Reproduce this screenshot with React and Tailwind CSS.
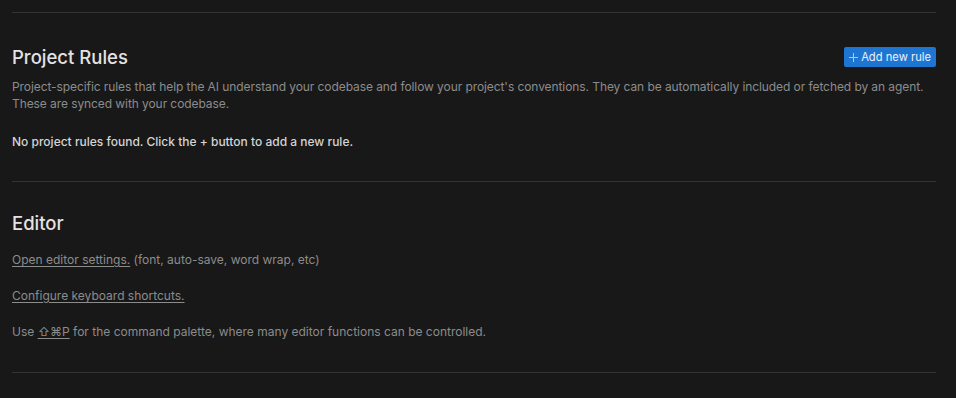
export default function App() {
  return (
    <div className="min-h-screen bg-[#181818] pl-3 pr-5 font-['Inter',sans-serif] text-[12px] text-[#8c8c8c]">
      <div className="pt-3">
        <hr className="border-0 border-t border-[#333333]" />

        {/* Project Rules */}
        <section className="pt-[32px] pb-[31px]">
          <div className="flex items-center justify-between">
            <h2 className="text-[18.5px] font-medium leading-[24px] text-[#e3e3e3]">Project Rules</h2>
            <button className="flex h-[20px] items-center gap-[3px] rounded-[2px] bg-[#1f76d2] px-[5px] text-[11.2px] text-[#e8f0fb]">
              <svg width="9" height="9" viewBox="0 0 9 9" className="stroke-[#a9c9ee]" strokeWidth="1">
                <path d="M4.5 0v9M0 4.5h9" />
              </svg>
              <span>Add new rule</span>
            </button>
          </div>
          <p className="mt-[9px] leading-[17px] tracking-[-0.08px]">
            Project-specific rules that help the AI understand your codebase and follow your project's conventions. They can be automatically included or fetched by an agent. These are synced with your codebase.
          </p>
          <p className="mt-[21px] font-medium leading-[17px] text-[#d4d4d4]">
            No project rules found. Click the + button to add a new rule.
          </p>
        </section>
        <hr className="border-0 border-t border-[#333333]" />

        {/* Editor */}
        <section className="pt-[29px] pb-[32px]">
          <h2 className="text-[18.5px] font-medium leading-[24px] text-[#e3e3e3]">Editor</h2>
          <p className="mt-[16px] leading-[17px]">
            <a className="underline underline-offset-2 decoration-[#8c8c8c]">Open editor settings.</a> (font, auto-save, word wrap, etc)
          </p>
          <p className="mt-[19px] leading-[17px]">
            <a className="underline underline-offset-2 decoration-[#8c8c8c]">Configure keyboard shortcuts.</a>
          </p>
          <p className="mt-[19px] leading-[17px]">
            Use <span className="underline underline-offset-2">⇧⌘P</span> for the command palette, where many editor functions can be controlled.
          </p>
        </section>
        <hr className="border-0 border-t border-[#333333]" />
      </div>
    </div>
  );
}
